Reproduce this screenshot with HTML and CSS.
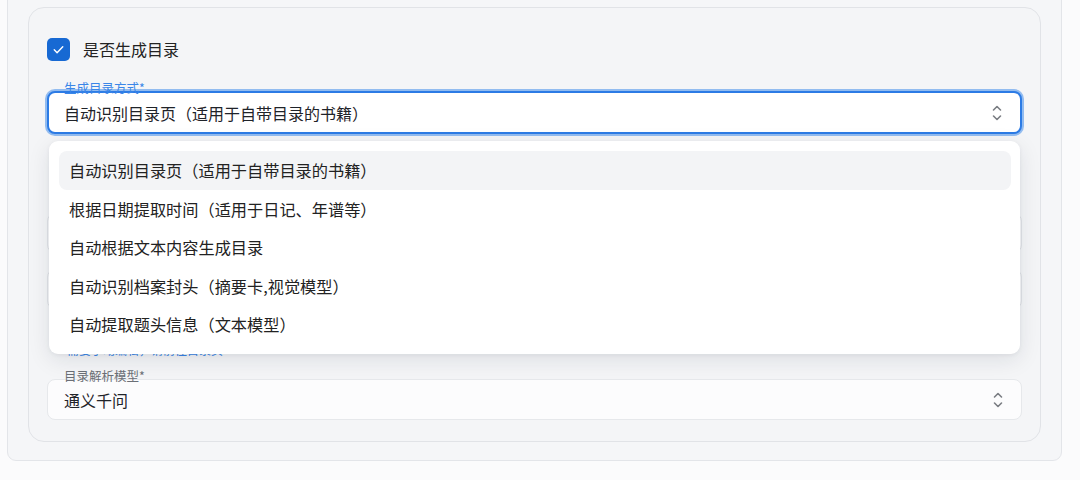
FILE: index.html
```html
<!DOCTYPE html>
<html lang="zh">
<head>
<meta charset="utf-8">
<link rel="stylesheet" href="styles.css">
</head>
<body>
<div class="panel">
  <div class="card">
    <label class="check-row">
      <span class="checkbox">
        <svg viewBox="0 0 24 24" width="17" height="17"><path d="M6 12.5l4 4 8-8.5" fill="none" stroke="#fff" stroke-width="2" stroke-linecap="round" stroke-linejoin="round"/></svg>
      </span>
      <span class="check-label">是否生成目录</span>
    </label>

    <div class="field field-first">
      <div class="select focused">
        <span class="float-label active">生成目录方式*</span>
        <span class="value">自动识别目录页（适用于自带目录的书籍）</span>
        <svg class="arrows" viewBox="0 0 12 20" width="12" height="20"><path d="M2.5 7l3.5-3.5L9.5 7M2.5 13l3.5 3.5L9.5 13" fill="none" stroke="#7a7d83" stroke-width="1.6" stroke-linecap="round" stroke-linejoin="round"/></svg>
      </div>
      <ul class="menu">
        <li class="item selected">自动识别目录页（适用于自带目录的书籍）</li>
        <li class="item">根据日期提取时间（适用于日记、年谱等）</li>
        <li class="item">自动根据文本内容生成目录</li>
        <li class="item">自动识别档案封头（摘要卡,视觉模型）</li>
        <li class="item">自动提取题头信息（文本模型）</li>
      </ul>
    </div>

    <div class="hidden-box box-a"></div>
    <div class="hidden-box box-b"></div>
    <div class="helper">需要手动编辑，请前往目录页</div>

    <div class="field field-second">
      <div class="select">
        <span class="float-label">目录解析模型*</span>
        <span class="value">通义千问</span>
        <svg class="arrows" viewBox="0 0 12 20" width="12" height="20"><path d="M2.5 7l3.5-3.5L9.5 7M2.5 13l3.5 3.5L9.5 13" fill="none" stroke="#7a7d83" stroke-width="1.6" stroke-linecap="round" stroke-linejoin="round"/></svg>
      </div>
    </div>
  </div>
</div>
</body>
</html>
```

FILE: styles.css
```css
* { box-sizing: border-box; }
html, body {
  margin: 0;
  padding: 0;
  background: #fbfbfc;
  font-family: "Noto Sans CJK SC", "Noto Sans", sans-serif;
  color: #1f2329;
}
.panel {
  margin: -14px 18px 0 7px;
  padding: 20px 20px 19px 20px;
  background: #f5f6f8;
  border: 1px solid #e3e5e9;
  border-radius: 0 0 9px 9px;
  height: 475px;
}
.card {
  display: flex;
  flex-direction: column;
  padding: 30px 18px 18px 18px;
  background: #f4f5f7;
  border: 1px solid #e1e3e7;
  border-radius: 16px;
  height: 435px;
}
.check-row {
  display: flex;
  align-items: center;
  gap: 13px;
  height: 23px;
}
.checkbox {
  width: 23px;
  height: 23px;
  border-radius: 5px;
  background: #1769d3;
  display: flex;
  align-items: center;
  justify-content: center;
}
.check-label {
  font-size: 16px;
  line-height: 23px;
  color: #222;
}
.field { position: relative; }
.field-first { margin-top: 30px; }
.select {
  position: relative;
  display: flex;
  align-items: center;
  justify-content: space-between;
  height: 41px;
  padding: 0 17px 0 16px;
  background: #fcfcfd;
  border: 1px solid #e6e8eb;
  border-radius: 8px;
}
.select.focused {
  height: 43px;
  padding-left: 15px;
  background: #fff;
  border: 2px solid #2c7be5;
  box-shadow: 0 0 0 2px rgba(66, 140, 235, 0.55);
}
.value {
  font-size: 16px;
  color: #1f2329;
  line-height: 22px;
}
.float-label {
  position: absolute;
  left: 16px;
  top: -11px;
  font-size: 12.5px;
  line-height: 14px;
  color: #6b6f76;
}
.float-label.active {
  left: 15px;
  top: -12px;
  color: #3a86e8;
}
.arrows { flex: none; margin-top: 1px; }
.menu {
  position: absolute;
  z-index: 5;
  left: 2px;
  right: 2px;
  top: 50px;
  margin: 0;
  padding: 10px 9px 10px 10px;
  list-style: none;
  background: #fff;
  border-radius: 9px;
  box-shadow: 0 6px 22px rgba(20, 30, 50, 0.10), 0 1px 4px rgba(20, 30, 50, 0.06);
}
.item {
  height: 38.5px;
  line-height: 38px;
  padding-left: 10px;
  font-size: 16.2px;
  color: #222;
  border-radius: 8px;
}
.item.selected { background: #f3f4f6; }
.hidden-box {
  height: 40px;
  border: 1px solid #e2e4e8;
  border-radius: 8px;
  background: #fbfbfc;
}
.box-a { margin-top: 79px; }
.box-b { margin-top: 16px; }
.helper {
  margin-top: 34px;
  margin-left: 20px;
  font-size: 12px;
  line-height: 14px;
  color: #3a86e8;
  height: 14px;
}
.field-second { margin-top: 22px; }
```
